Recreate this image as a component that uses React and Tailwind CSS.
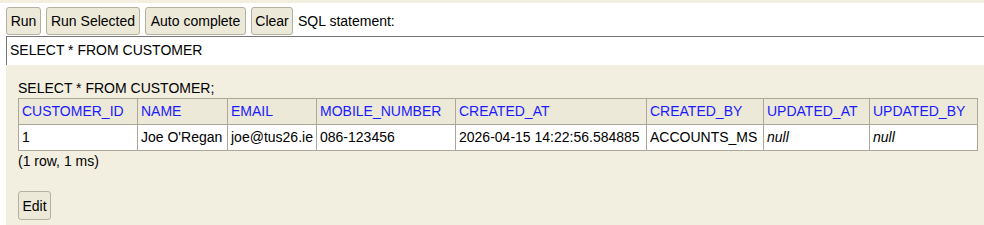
const columns = [
  { name: 'CUSTOMER_ID', width: 119 },
  { name: 'NAME', width: 90 },
  { name: 'EMAIL', width: 89 },
  { name: 'MOBILE_NUMBER', width: 139 },
  { name: 'CREATED_AT', width: 191 },
  { name: 'CREATED_BY', width: 117 },
  { name: 'UPDATED_AT', width: 106 },
  { name: 'UPDATED_BY', width: 108 },
];

const row = ['1', "Joe O'Regan", 'joe@tus26.ie', '086-123456', '2026-04-15 14:22:56.584885', 'ACCOUNTS_MS', null, null];

function Btn({ children, className = '' }) {
  return (
    <button className={`h-[28px] border border-[#b5b1a1] rounded-[3px] bg-[#ece9d8] text-black text-[14px] leading-none flex items-center justify-center ${className}`}>
      {children}
    </button>
  );
}

export default function App() {
  return (
    <div className="w-[984px] h-[225px] bg-white text-black text-[14px] font-['Liberation_Sans',Arial,sans-serif] overflow-hidden flex flex-col">
      <div className="h-[3px] bg-[#f3efe0]" />

      {/* toolbar */}
      <div className="h-[33px] pt-[4px] pl-[6px] flex items-start gap-[5px]">
        <Btn className="w-[35px]">Run</Btn>
        <Btn className="w-[94px]">Run Selected</Btn>
        <Btn className="w-[101px]">Auto complete</Btn>
        <Btn className="w-[42px]">Clear</Btn>
        <span className="h-[28px] flex items-center">SQL statement:</span>
      </div>

      {/* sql editor */}
      <div className="ml-[6px] h-[29px] border-t border-l border-[#767676] pl-[3px] pt-[5px] leading-[16px]">
        SELECT * FROM CUSTOMER
      </div>

      {/* result */}
      <div className="ml-[6px] flex-1 bg-[#f3efe0] pt-[15px] pl-[12px]">
        <div className="leading-[16px] mb-[2px]">SELECT * FROM CUSTOMER;</div>
        <table className="table-fixed border-collapse w-[959px]">
          <colgroup>
            {columns.map(c => <col key={c.name} style={{ width: c.width }} />)}
          </colgroup>
          <thead>
            <tr>
              {columns.map(c => (
                <th key={c.name} className="bg-[#ece9d8] border border-[#aca899] text-left font-normal text-[#1a1aff] px-[3px] py-[4px] leading-[17px] whitespace-nowrap overflow-hidden">
                  {c.name}
                </th>
              ))}
            </tr>
          </thead>
          <tbody>
            <tr>
              {row.map((v, i) => (
                <td key={i} className="bg-white border border-[#aca899] px-[3px] py-[4px] leading-[17px] whitespace-nowrap overflow-hidden">
                  {v === null ? <i>null</i> : v}
                </td>
              ))}
            </tr>
          </tbody>
        </table>
        <div className="leading-[16px] mt-[2px]">(1 row, 1 ms)</div>
        <Btn className="w-[33px] h-[29px] mt-[22px]">Edit</Btn>
      </div>
    </div>
  );
}
